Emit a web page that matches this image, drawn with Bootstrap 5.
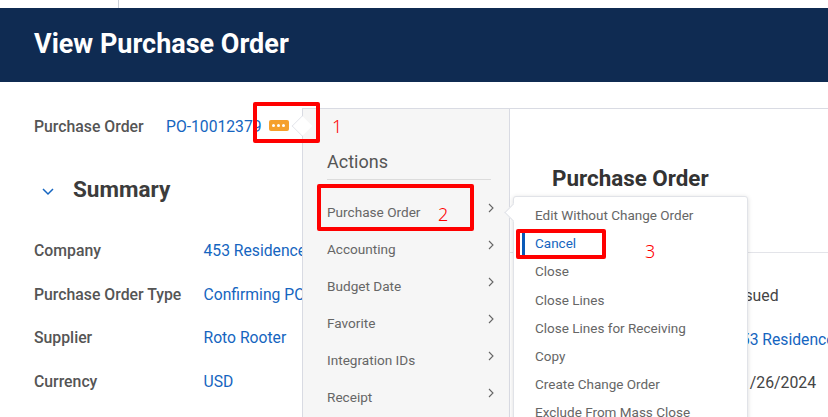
<!DOCTYPE html>
<html lang="en"><head><meta charset="utf-8"><title>View Purchase Order</title>
<link rel="stylesheet" href="https://cdn.jsdelivr.net/npm/bootstrap@5.3.0/dist/css/bootstrap.min.css">
<style>
html,body{height:417px;overflow:hidden;background:#fff}
body{font-family:Roboto,"Liberation Sans",sans-serif;font-size:14px;color:#555;position:relative;width:828px}
.topstrip{height:8px}
.topstrip-line{width:1px;height:8px;background:#ccd0d8;margin-left:118px}
.pagehead{height:74px;background:#0f2b52;color:#fff;padding-left:34px;font-size:27px;font-weight:700;line-height:72px}
.bodywrap{height:335px}
.leftside{width:510px;flex:none;padding-left:34px}
.rightside{flex:1;border-top:1px solid #d9dbe3;margin-top:26px;padding-left:42px;white-space:nowrap}
.porow{height:89px;padding-top:35px;line-height:20px}
.lbl{font-weight:500;color:#555;font-size:15.8px}
.polbl{width:132px}
.lnk{color:#1565c0;font-size:15.7px;text-decoration:none;white-space:nowrap}
.dotsbtn{width:20px;height:11px;background:#f5a02c;border-radius:2px;margin-left:7px;gap:2px;margin-top:3px}
.dotsbtn i{width:3px;height:3px;border-radius:50%;background:#fff;display:block}
.sumhead{height:68px;padding-left:7px;gap:18px}
.sumhead svg{margin-top:8px}
.sumhead h2{font-size:22.5px;font-weight:700;color:#3c3c3c;margin:3px 0 0;line-height:1}
.sumrow{height:43.7px;white-space:nowrap}
.sumlbl{width:169.5px;flex:none;font-weight:500;font-size:15.8px}
.righthead{font-size:22.4px;font-weight:700;color:#333;margin:56px 0 0;line-height:27px}
.rightrule{border-top:1px solid #e3e4e9;margin:60px 0 0 -42px}
.rightvals{margin-left:180px;padding-top:21px;font-size:15.8px;line-height:43.5px;color:#444}
.actmenu{position:absolute;left:302px;top:108px;width:208px;height:320px;background:#f6f6f6;border:1px solid #d9dbe3;padding:41px 14px 0 24px}
.acttitle{font-size:18px;line-height:24px;color:#555;border-bottom:1px solid #dcdcdc;padding-bottom:5px;margin-bottom:19px;margin-right:4px}
.actitem{height:37.1px;padding-top:4px;line-height:18px;color:#666;font-size:13.6px}
.chev{margin-top:-2px}
.arrow1{position:absolute;left:291px;top:115px;width:22px;height:22px;background:#fff;transform:rotate(45deg) scale(.66);border:1px solid #dfe1e6;border-top:0;border-right:0;z-index:2}
.submenu{position:absolute;left:513px;top:196px;width:235px;height:240px;background:#fff;border:1px solid #e1e3e8;border-radius:3px;box-shadow:0 1px 5px rgba(0,0,0,.14);padding-top:4px}
.subitem{height:28.2px;line-height:28px;padding-left:21px;color:#666;font-size:13.5px;white-space:nowrap}
.subactive{color:#1565c0;box-shadow:inset 3px 0 0 #0a5ab8;margin-left:8px;padding-left:13px;height:26px;line-height:26px;margin-top:1px;margin-bottom:1.2px}
.arrow2{position:absolute;left:507px;top:206px;width:13px;height:13px;background:#fff;transform:rotate(45deg);border-left:1px solid #e1e3e8;border-bottom:1px solid #e1e3e8;z-index:2}
.redbox{position:absolute;border:4px solid #f00;border-radius:2px;z-index:5}
.rb1{left:253px;top:102px;width:67px;height:41px}
.rb2{left:317px;top:184px;width:157px;height:47px}
.rb3{left:516px;top:229px;width:90px;height:30px}
.rednum{position:absolute;color:#f00;font-family:"Noto Sans",sans-serif;font-size:18px;font-weight:300;line-height:20px;z-index:5}
.n1{left:332px;top:116px}.n2{left:438px;top:204px}.n3{left:645px;top:241px}
</style></head>
<body>
<div class="topstrip"><div class="topstrip-line"></div></div>
<div class="pagehead">View Purchase Order</div>
<div class="bodywrap d-flex">
  <div class="leftside">
    <div class="porow d-flex align-items-start">
      <span class="lbl polbl">Purchase Order</span>
      <a class="lnk" href="#">PO-10012379</a>
      <span class="dotsbtn d-inline-flex align-items-center justify-content-center"><i></i><i></i><i></i></span>
    </div>
    <div class="sumhead d-flex align-items-start">
      <svg width="14" height="24" viewBox="0 0 14 24" fill="none" stroke="#1565c0" stroke-width="1.5"><path d="M2 10l5 5 5-5"/></svg>
      <h2 class="pt-1">Summary</h2>
    </div>
    <div class="sumrow d-flex"><span class="sumlbl">Company</span><a class="lnk" href="#">453 Residence Inn</a></div>
    <div class="sumrow d-flex"><span class="sumlbl">Purchase Order Type</span><a class="lnk" href="#">Confirming PO</a></div>
    <div class="sumrow d-flex"><span class="sumlbl">Supplier</span><a class="lnk" href="#">Roto Rooter</a></div>
    <div class="sumrow d-flex"><span class="sumlbl">Currency</span><a class="lnk" href="#">USD</a></div>
  </div>
  <div class="rightside">
    <h2 class="righthead">Purchase Order</h2>
    <div class="rightrule"></div>
    <div class="rightvals">
      <div>Issued</div>
      <div><a class="lnk" href="#">453 Residence</a></div>
      <div>01/26/2024</div>
    </div>
  </div>
</div>

<div class="arrow1"></div>
<div class="actmenu">
  <div class="acttitle">Actions</div>
  <div class="actitem d-flex justify-content-between"><span>Purchase Order</span><svg class="chev" width="8" height="14" viewBox="0 0 8 14" fill="none" stroke="#666" stroke-width="1.1"><path d="M2 3l4 4-4 4"/></svg></div>
  <div class="actitem d-flex justify-content-between"><span>Accounting</span><svg class="chev" width="8" height="14" viewBox="0 0 8 14" fill="none" stroke="#666" stroke-width="1.1"><path d="M2 3l4 4-4 4"/></svg></div>
  <div class="actitem d-flex justify-content-between"><span>Budget Date</span><svg class="chev" width="8" height="14" viewBox="0 0 8 14" fill="none" stroke="#666" stroke-width="1.1"><path d="M2 3l4 4-4 4"/></svg></div>
  <div class="actitem d-flex justify-content-between"><span>Favorite</span><svg class="chev" width="8" height="14" viewBox="0 0 8 14" fill="none" stroke="#666" stroke-width="1.1"><path d="M2 3l4 4-4 4"/></svg></div>
  <div class="actitem d-flex justify-content-between"><span>Integration IDs</span><svg class="chev" width="8" height="14" viewBox="0 0 8 14" fill="none" stroke="#666" stroke-width="1.1"><path d="M2 3l4 4-4 4"/></svg></div>
  <div class="actitem d-flex justify-content-between"><span>Receipt</span><svg class="chev" width="8" height="14" viewBox="0 0 8 14" fill="none" stroke="#666" stroke-width="1.1"><path d="M2 3l4 4-4 4"/></svg></div>
</div>
<div class="arrow2"></div>
<div class="submenu">
  <div class="subitem">Edit Without Change Order</div>
  <div class="subitem subactive">Cancel</div>
  <div class="subitem">Close</div>
  <div class="subitem">Close Lines</div>
  <div class="subitem">Close Lines for Receiving</div>
  <div class="subitem">Copy</div>
  <div class="subitem">Create Change Order</div>
  <div class="subitem">Exclude From Mass Close</div>
</div>
<div class="redbox rb1"></div><div class="redbox rb2"></div><div class="redbox rb3"></div>
<span class="rednum n1">1</span><span class="rednum n2">2</span><span class="rednum n3">3</span>
</body></html>
